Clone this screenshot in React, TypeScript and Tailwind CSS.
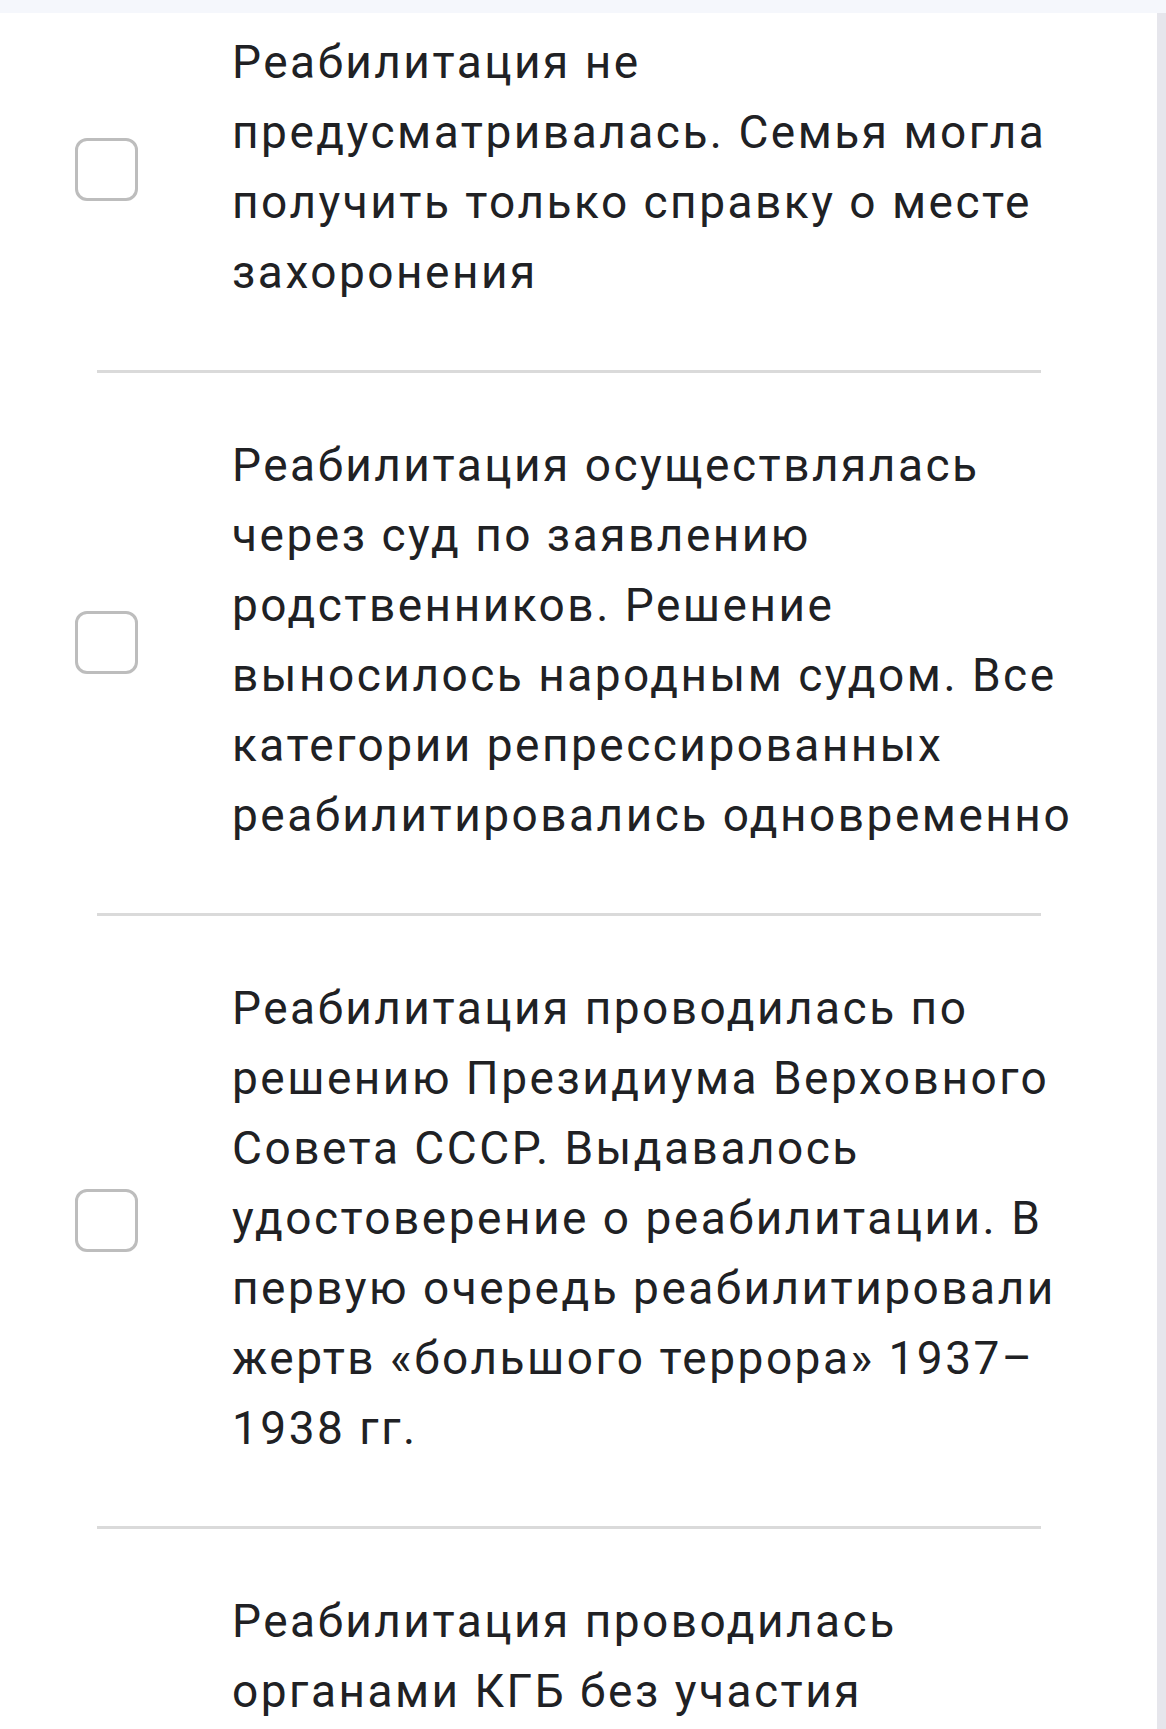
const options = [
  "Реабилитация не предусматривалась. Семья могла получить только справку о месте захоронения",
  "Реабилитация осуществлялась через суд по заявлению родственников. Решение выносилось народным судом. Все категории репрессированных реабилитировались одновременно",
  "Реабилитация проводилась по решению Президиума Верховного Совета СССР. Выдавалось удостоверение о реабилитации. В первую очередь реабилитировали жертв «большого террора» 1937–1938 гг.",
  "Реабилитация проводилась органами КГБ без участия родственников. Документы о реабилитации не выдавались, сведения о судьбе репрессированных оставались засекреченными",
];

function Checkbox() {
  return (
    <span className="mt-1 block h-[63px] w-[63px] shrink-0 rounded-[12px] border-[3px] border-[#bdbdbd] bg-white" />
  );
}

function Option({ text, first, last }: { text: string; first?: boolean; last?: boolean }) {
  return (
    <div>
      <label
        className={`flex items-center pl-[75px] ${first ? "pt-[14px]" : "pt-[57px]"} pb-[63px]`}
      >
        <Checkbox />
        <span className="ml-[94px] w-[855px] text-[46px] leading-[70px] tracking-[2.5px] text-[#202124]">
          {text}
        </span>
      </label>
      {!last && <div className="ml-[97px] mr-[116px] h-[3px] bg-[#dadada]" />}
    </div>
  );
}

export default function App() {
  return (
    <div
      className="flex h-[1729px] w-[1166px] flex-col overflow-hidden bg-white"
      style={{ fontFamily: "Roboto, 'Noto Sans', sans-serif" }}
    >
      <div className="h-[13px] shrink-0 bg-[#f5f7fc]" />
      <div className="flex min-h-0 flex-1">
        <div className="w-[1157px] bg-white">
          {options.map((text, i) => (
            <Option key={i} text={text} first={i === 0} last={i === options.length - 1} />
          ))}
        </div>
        <div className="w-[9px] bg-[#e6e6ec]" />
      </div>
    </div>
  );
}
